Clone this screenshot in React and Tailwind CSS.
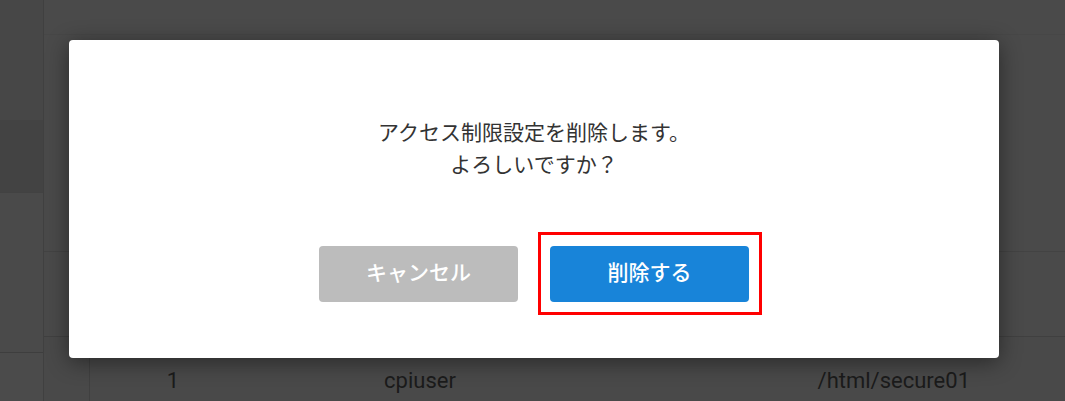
import React from 'react'

const jp = { fontFamily: 'Roboto, "Noto Sans CJK JP", sans-serif' }

function BackgroundPage() {
  return (
    <div className="flex h-full w-full bg-[#494949]">
      {/* side menu */}
      <div className="flex w-[44px] shrink-0 flex-col border-r border-[#404040]">
        <div className="h-[120px] bg-[#474747]" />
        <div className="h-[73px] border-b border-[#424242] bg-[#434343]" />
        <div className="h-[160px] border-b border-[#3e3e3e] bg-[#4a4a4a]" />
        <div className="flex-1 bg-[#4b4b4b]" />
      </div>
      <div className="flex flex-1 flex-col">
        <div className="h-[35px] shrink-0 border-b border-[#474747] bg-[#4a4a4a]" />
        <div className="h-[217px] shrink-0 border-b border-[#434343] bg-[#4a4a4a]" />
        <div className="h-[85px] shrink-0 border-b border-[#404040] bg-[#4a4a4a]" />
        <div className="flex h-[86px] shrink-0">
          <div className="w-[46px] shrink-0 border-r border-[#404040]" />
          <div className="flex flex-1 items-center text-[22px] text-[#1b1b1b]" style={jp}>
            <div className="w-[166px] text-center">1</div>
            <div className="w-[328px] text-center">cpiuser</div>
            <div className="flex-1 pr-[95px] text-right">/html/secure01</div>
          </div>
        </div>
      </div>
    </div>
  )
}

export default function App() {
  return (
    <div className="relative h-[401px] w-[1065px] overflow-hidden">
      <BackgroundPage />

      <div
        className="absolute left-[69px] top-[40px] flex h-[318px] w-[930px] flex-col items-center rounded-[4px] bg-white pt-[77px] shadow-[0_4px_22px_rgba(0,0,0,0.45)]"
        style={jp}
      >
        <div className="text-center text-[21px] leading-[32px] text-[#333333]">
          <p>アクセス制限設定を削除します。</p>
          <p>よろしいですか？</p>
        </div>

        <div className="mt-[65px] flex gap-[32px]">
          <button className="h-[56px] w-[199px] rounded-[4px] bg-[#bcbcbc] text-[21px] font-medium text-white">
            キャンセル
          </button>
          <div className="relative">
            <button className="h-[56px] w-[199px] rounded-[4px] bg-[#1884d9] text-[21px] font-medium text-white">
              削除する
            </button>
            <div className="pointer-events-none absolute left-[-12px] top-[-14px] h-[83px] w-[224px] border-[3px] border-[#ff0000]" />
          </div>
        </div>
      </div>
    </div>
  )
}
